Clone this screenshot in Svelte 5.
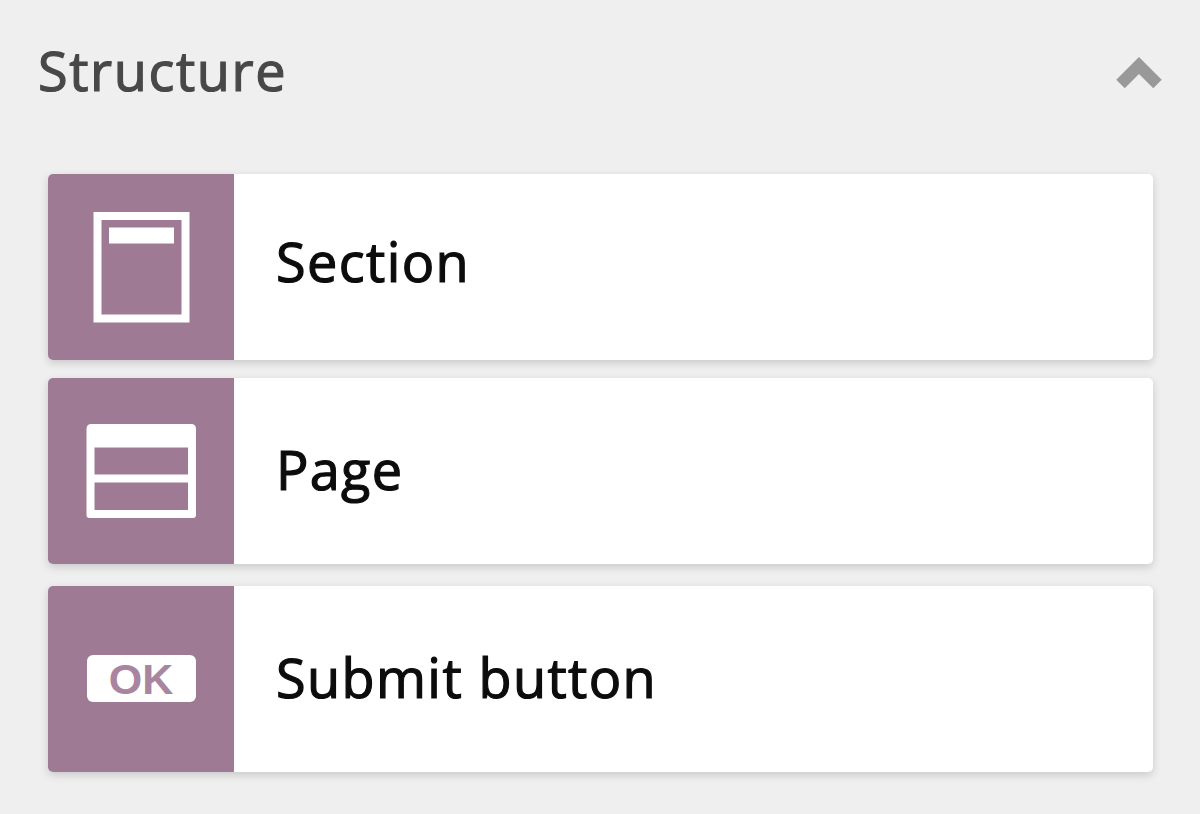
<script>
  const fields = [
    { type: 'section', label: 'Section' },
    { type: 'page', label: 'Page' },
    { type: 'submit', label: 'Submit button' }
  ];
</script>

<div class="panel">
  <div class="panel-header">
    <span class="title">Structure</span>
    <svg class="chevron" width="46" height="34" viewBox="0 0 46 34">
      <path d="M4.5 29 L23 10.5 L41.5 29" />
    </svg>
  </div>
  <div class="field-list">
    {#each fields as field}
      <div class="field {field.type}">
        <div class="field-icon">
          {#if field.type === 'section'}
            <svg width="186" height="186" viewBox="0 0 186 186">
              <rect class="line" x="49.5" y="42" width="88" height="102.5" />
              <rect class="fill" x="61" y="53.5" width="65" height="16" />
            </svg>
          {:else if field.type === 'page'}
            <svg width="186" height="186" viewBox="0 0 186 186">
              <path
                class="fill"
                d="M43.500 46 H143 Q148 46 148 51 V137 Q148 140 145 140 H41.500 Q38.500 140 38.500 137 V51 Q38.500 46 43.500 46 Z M46.500 69.500 V96.500 H140 V69.500 Z M46.500 104.500 V132 H140 V104.500 Z"
              />
            </svg>
          {:else}
            <span class="ok">OK</span>
          {/if}
        </div>
        <span class="label">{field.label}</span>
      </div>
    {/each}
  </div>
</div>

<style>
  :global(body) {
    background: #efefef;
  }
  .panel {
    box-sizing: border-box;
    height: 814px;
    padding: 0 47px 0 48px;
    background: #efefef;
    font-family: "Open Sans", "Noto Sans", sans-serif;
    font-size: 54px;
    overflow: hidden;
  }
  .panel-header {
    display: flex;
    align-items: center;
    justify-content: space-between;
    height: 144px;
    margin: 0 -9px 30px -10px;
  }
  .title {
    padding-bottom: 4px;
    color: #484848;
    letter-spacing: 1.6px;
    -webkit-text-stroke: 1.2px #484848;
  }
  .chevron path {
    fill: none;
    stroke: #999;
    stroke-width: 12;
  }
  .field-list {
    display: flex;
    flex-direction: column;
  }
  .field {
    display: flex;
    align-items: center;
    height: 186px;
    margin-bottom: 17.5px;
    border-radius: 5px;
    background: #fff;
    color: #0c0c0c;
    box-shadow: 0 3px 8px rgba(0, 0, 0, 0.16);
  }
  .page {
    margin-bottom: 22px;
  }
  .field-icon {
    display: flex;
    align-items: center;
    justify-content: center;
    width: 186px;
    height: 186px;
    margin-right: 42px;
    border-radius: 5px 0 0 5px;
    background: #9e7a94;
  }
  .label {
    padding-bottom: 4px;
    letter-spacing: 1.4px;
    -webkit-text-stroke: 1.2px #0c0c0c;
  }
  .section .label {
    padding-bottom: 12px;
  }
  .page .label {
    padding-bottom: 4px;
    letter-spacing: 1.3px;
  }
  .line {
    fill: none;
    stroke: #fff;
    stroke-width: 8;
  }
  .fill {
    fill: #fff;
    fill-rule: evenodd;
  }
  .ok {
    width: 109px;
    height: 47px;
    border-radius: 6px;
    background: #fff;
    color: #a985a0;
    font: bold 43px/48px "Liberation Sans", Arial, sans-serif;
    text-align: center;
  }
</style>
